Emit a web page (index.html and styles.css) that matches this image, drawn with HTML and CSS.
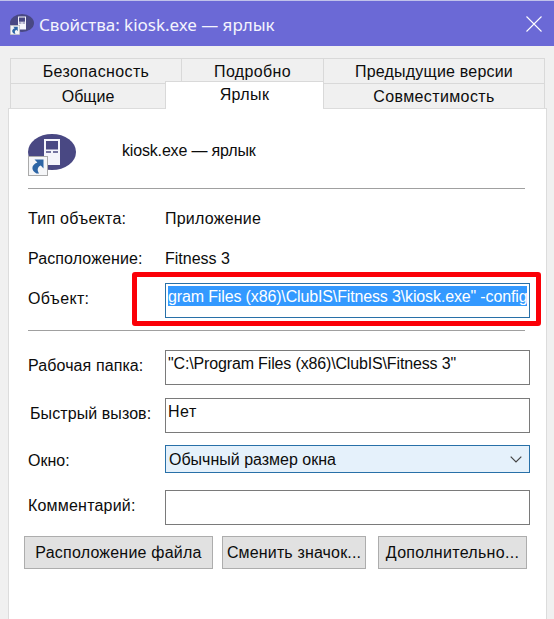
FILE: index.html
```html
<!DOCTYPE html>
<html lang="ru">
<head>
<meta charset="utf-8">
<title>Свойства: kiosk.exe — ярлык</title>
<link rel="stylesheet" href="styles.css">
</head>
<body>
<svg width="0" height="0" class="defs">
  <symbol id="kiosk" viewBox="0 0 48 42">
    <ellipse cx="24" cy="18" rx="24" ry="18" fill="#494883"/>
    <rect x="16" y="5" width="16" height="26" fill="#f4f4fb"/>
    <rect x="18" y="7" width="12" height="8.500" fill="#494883"/>
    <path d="M18 18h5M25 18h5" stroke="#494883" stroke-width="1.600"/>
    <rect x=".5" y="22.500" width="19" height="19" fill="#f5f6f8" stroke="#aaa"/>
    <path d="M6.500 25.500H15.500V34.500L12.800 31.600C9.500 33 8.800 36 11 39.500H8.500C3.200 36.500 2.600 31 9.400 28.400Z" fill="#2d65a5"/>
  </symbol>
</svg>
<div class="window">
  <header class="titlebar">
    <svg class="title-icon"><use href="#kiosk"/></svg>
    <span class="title">Свойства: kiosk.exe — ярлык</span>
    <svg class="close" viewBox="0 0 16 16"><path d="M.5 .5L15.500 15.500M15.500 .5L.5 15.500"/></svg>
  </header>
  <nav class="tabs">
    <div class="tab-row back">
      <div class="tab"><span class="t-security">Безопасность</span></div>
      <div class="tab"><span class="t-details">Подробно</span></div>
      <div class="tab"><span class="t-previous">Предыдущие версии</span></div>
    </div>
    <div class="tab-row front">
      <div class="tab"><span class="t-general">Общие</span></div>
      <div class="tab active"><span class="t-shortcut">Ярлык</span></div>
      <div class="tab"><span class="t-compat">Совместимость</span></div>
    </div>
  </nav>
  <main class="panel">
    <div class="head">
      <svg class="app-icon"><use href="#kiosk"/></svg>
      <span class="name">kiosk.exe — ярлык</span>
    </div>
    <div class="row type"><span class="label l-type">Тип объекта:</span><span class="v-type">Приложение</span></div>
    <div class="row location"><span class="label l-location">Расположение:</span><span class="v-location">Fitness 3</span></div>
    <div class="row target">
      <span class="label l-target">Объект:</span>
      <div class="field focused"><span class="selected"><span class="v-target">gram Files (x86)\ClubIS\Fitness 3\kiosk.exe" -config</span></span></div>
      <div class="highlight"></div>
    </div>
    <div class="row folder"><span class="label l-folder">Рабочая папка:</span><div class="field"><span class="v-folder">"C:\Program Files (x86)\ClubIS\Fitness 3"</span></div></div>
    <div class="row hotkey"><span class="label l-hotkey">Быстрый вызов:</span><div class="field"><span class="v-hotkey">Нет</span></div></div>
    <div class="row size">
      <span class="label l-size">Окно:</span>
      <div class="select"><span class="v-size">Обычный размер окна</span><svg class="chevron" viewBox="0 0 12 7"><path d="M.7 .7L6 6L11.300 .7"/></svg></div>
    </div>
    <div class="row comment"><span class="label l-comment">Комментарий:</span><div class="field"></div></div>
    <div class="buttons">
      <button><span class="b-location">Расположение файла</span></button>
      <button><span class="b-icon">Сменить значок...</span></button>
      <button><span class="b-more">Дополнительно...</span></button>
    </div>
  </main>
</div>
</body>
</html>
```
FILE: styles.css
```css
* { box-sizing: border-box; }
body { margin: 0; overflow: hidden; }
.defs { display: none; }
.window {
  width: 554px; height: 619px; background: #f0f0f0; color: #0c0c0c;
  font: 16px/20px "Liberation Sans", Arial, sans-serif; white-space: nowrap;
  display: flex; flex-direction: column;
}
.titlebar {
  height: 46px; flex: none; display: flex; background: #6b69d6;
  border-top: 1px solid #c0c2ea; padding-left: 10px; color: #f4f4fd;
}
.title-icon { width: 24px; height: 21px; margin: 13px 5px 0 0; }
.title { font: 17px/24px "Noto Sans", sans-serif; margin-top: 12px; letter-spacing: -.03px; }
.close { width: 16px; height: 16px; margin: 15px 12px 0 auto; fill: none; stroke: #fff; stroke-width: 1.1; }
.tabs { padding: 12px 9px 0 10px; flex: none; }
.tab-row { display: grid; text-align: center; height: 25px; }
.back { grid-template-columns: 171px 142px 222px; }
.front { grid-template-columns: 155px 158px 222px; }
.tab { border: solid #d9d9d9; border-width: 1px 0 0 1px; padding-top: 3px; }
.tab:last-child { border-right-width: 1px; }
.active { background: #fff; margin-top: -2px; height: 28px; position: relative; }
.panel {
  flex: 1; background: #fff; border: 1px solid #dcdcdc; border-bottom: 0;
  margin: 0 7px 0 8px; padding: 0 16px 0 19px;
}
.head { display: flex; height: 80px; width: 497px; padding-top: 25px; border-bottom: 1px solid #a0a0a0; }
.app-icon { width: 48px; height: 42px; margin-right: 46px; }
.name { margin-top: 7px; }
.row { display: grid; grid-template-columns: 137px 365px; align-items: start; position: relative; }
.type { padding-top: 20px; height: 59px; }
.location { height: 35px; }
.location > span { margin-top: 1px; }
.target { height: 48px; width: 497px; border-bottom: 1px solid #a0a0a0; margin-bottom: 19px; }
.target .label { margin-top: 6px; }
.field { height: 35px; border: 1px solid #7a7a7a; padding: 3px 2px 2px; }
.focused { border-color: #2870a8; padding-top: 2px; }
.selected { display: block; background: #39f; color: #fff; height: 20px; line-height: 21px; }
.highlight { position: absolute; left: 104px; top: -11px; width: 409px; height: 54px; border: 5px solid #fb0007; border-radius: 3px; }
.folder, .hotkey { height: 48px; }
.folder .label, .hotkey .label, .comment .label { margin-top: 6px; }
.hotkey { height: 47px; }
.size { height: 45px; }
.size .label { margin-top: 6px; }
.select { height: 28px; border: 1px solid #2870a8; background: #e5f1fb; display: flex; padding: 4px 7px 0 3px; }
.chevron { width: 12px; height: 7px; margin: 6px 0 0 auto; fill: none; stroke: #444; stroke-width: 1.2; }
.comment { height: 46px; }
.buttons { display: grid; grid-template-columns: 189px 144px 149px; column-gap: 9px; margin-left: -4px; }
.buttons button:last-child { margin-left: 3px; width: 149px; }
button { height: 33px; border: 1px solid #adadad; background: #e1e1e1; padding: 0; font: inherit; color: inherit; white-space: nowrap; }

/* Per-string tracking */
.t-security { letter-spacing: .38px; }
.t-details { letter-spacing: .35px; }
.t-previous { letter-spacing: .2px; }
.t-shortcut { letter-spacing: .4px; }
.t-compat { letter-spacing: .37px; }
.name { letter-spacing: -.17px; }
.l-type { letter-spacing: .25px; }
.v-type { letter-spacing: .23px; }
.l-location { letter-spacing: .1px; }
.l-target { letter-spacing: .35px; }
.v-target { letter-spacing: -.14px; }
.l-folder { letter-spacing: .1px; }
.v-folder { letter-spacing: -.15px; }
.l-hotkey { letter-spacing: .08px; padding-left: 2px; }
.v-hotkey { letter-spacing: .5px; }
.l-comment { letter-spacing: .2px; }
.b-location { letter-spacing: .22px; }
.b-icon { letter-spacing: .15px; }
.b-more { letter-spacing: .3px; }
```
